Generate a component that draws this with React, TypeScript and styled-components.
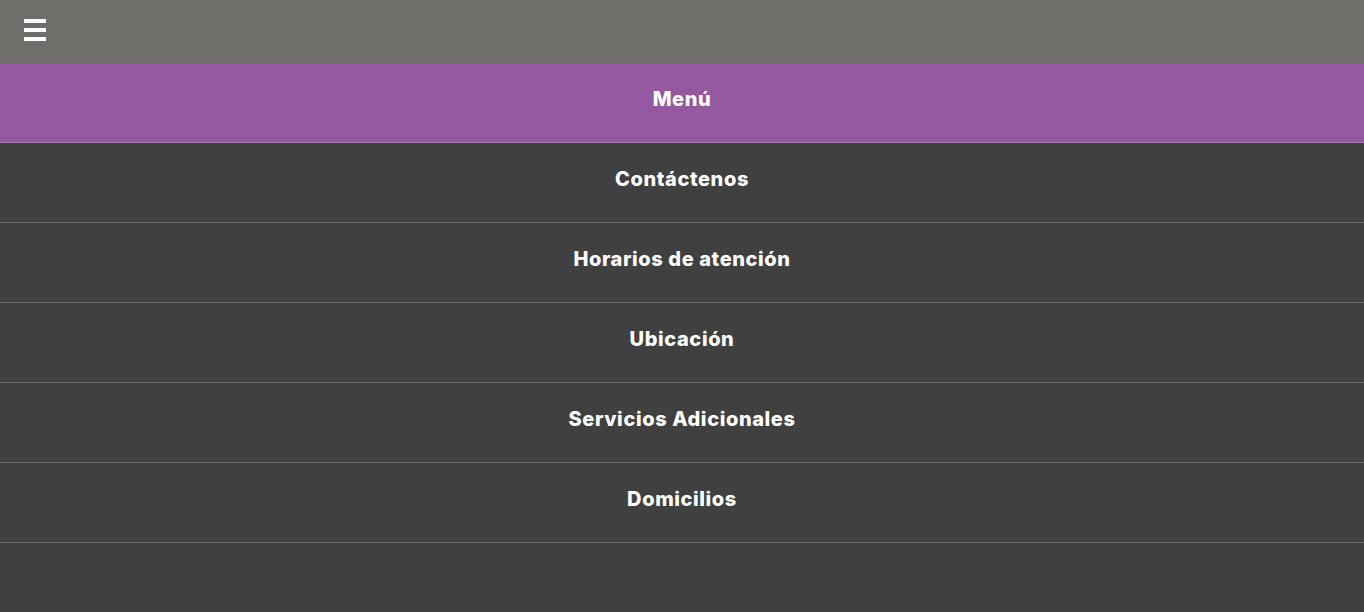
import React from "react";
import styled, { createGlobalStyle } from "styled-components";

const Global = createGlobalStyle`
  html, body { margin: 0; padding: 0; background: #404040; }
  body { font-family: Inter, "Noto Sans", sans-serif; }
`;

const Page = styled.div`
  min-height: 612px;
  background: #404040;
  display: flex;
  flex-direction: column;
`;

const Header = styled.header`
  height: 63px;
  background: #6f6e6b;
  display: flex;
  align-items: flex-start;
  padding: 19px 0 0 24px;
  box-sizing: border-box;
`;

const Burger = styled.button`
  background: none;
  border: 0;
  padding: 0;
  display: flex;
  flex-direction: column;
  gap: 5px;
  cursor: pointer;
`;

const Bar = styled.span`
  display: block;
  width: 22px;
  height: 4px;
  background: #ffffff;
`;

const Nav = styled.nav`
  display: flex;
  flex-direction: column;
`;

const Item = styled.a<{ $active?: boolean }>`
  display: flex;
  align-items: center;
  justify-content: center;
  height: 72px;
  padding-bottom: 7px;
  box-sizing: content-box;
  border-bottom: 1px solid ${(p) => (p.$active ? "#a97bb3" : "#6a6a6a")};
  background: ${(p) => (p.$active ? "#9358a0" : "#404040")};
  color: #ffffff;
  font-size: 20px;
  font-weight: 800;
  letter-spacing: 0.6px;
  text-decoration: none;
`;

const items = [
  "Contáctenos",
  "Horarios de atención",
  "Ubicación",
  "Servicios Adicionales",
  "Domicilios",
];

export default function App() {
  return (
    <Page>
      <Global />
      <Header>
        <Burger aria-label="menu">
          <Bar />
          <Bar />
          <Bar />
        </Burger>
      </Header>
      <Nav>
        <Item $active href="#">Menú</Item>
        {items.map((t) => (
          <Item key={t} href="#">{t}</Item>
        ))}
      </Nav>
    </Page>
  );
}
